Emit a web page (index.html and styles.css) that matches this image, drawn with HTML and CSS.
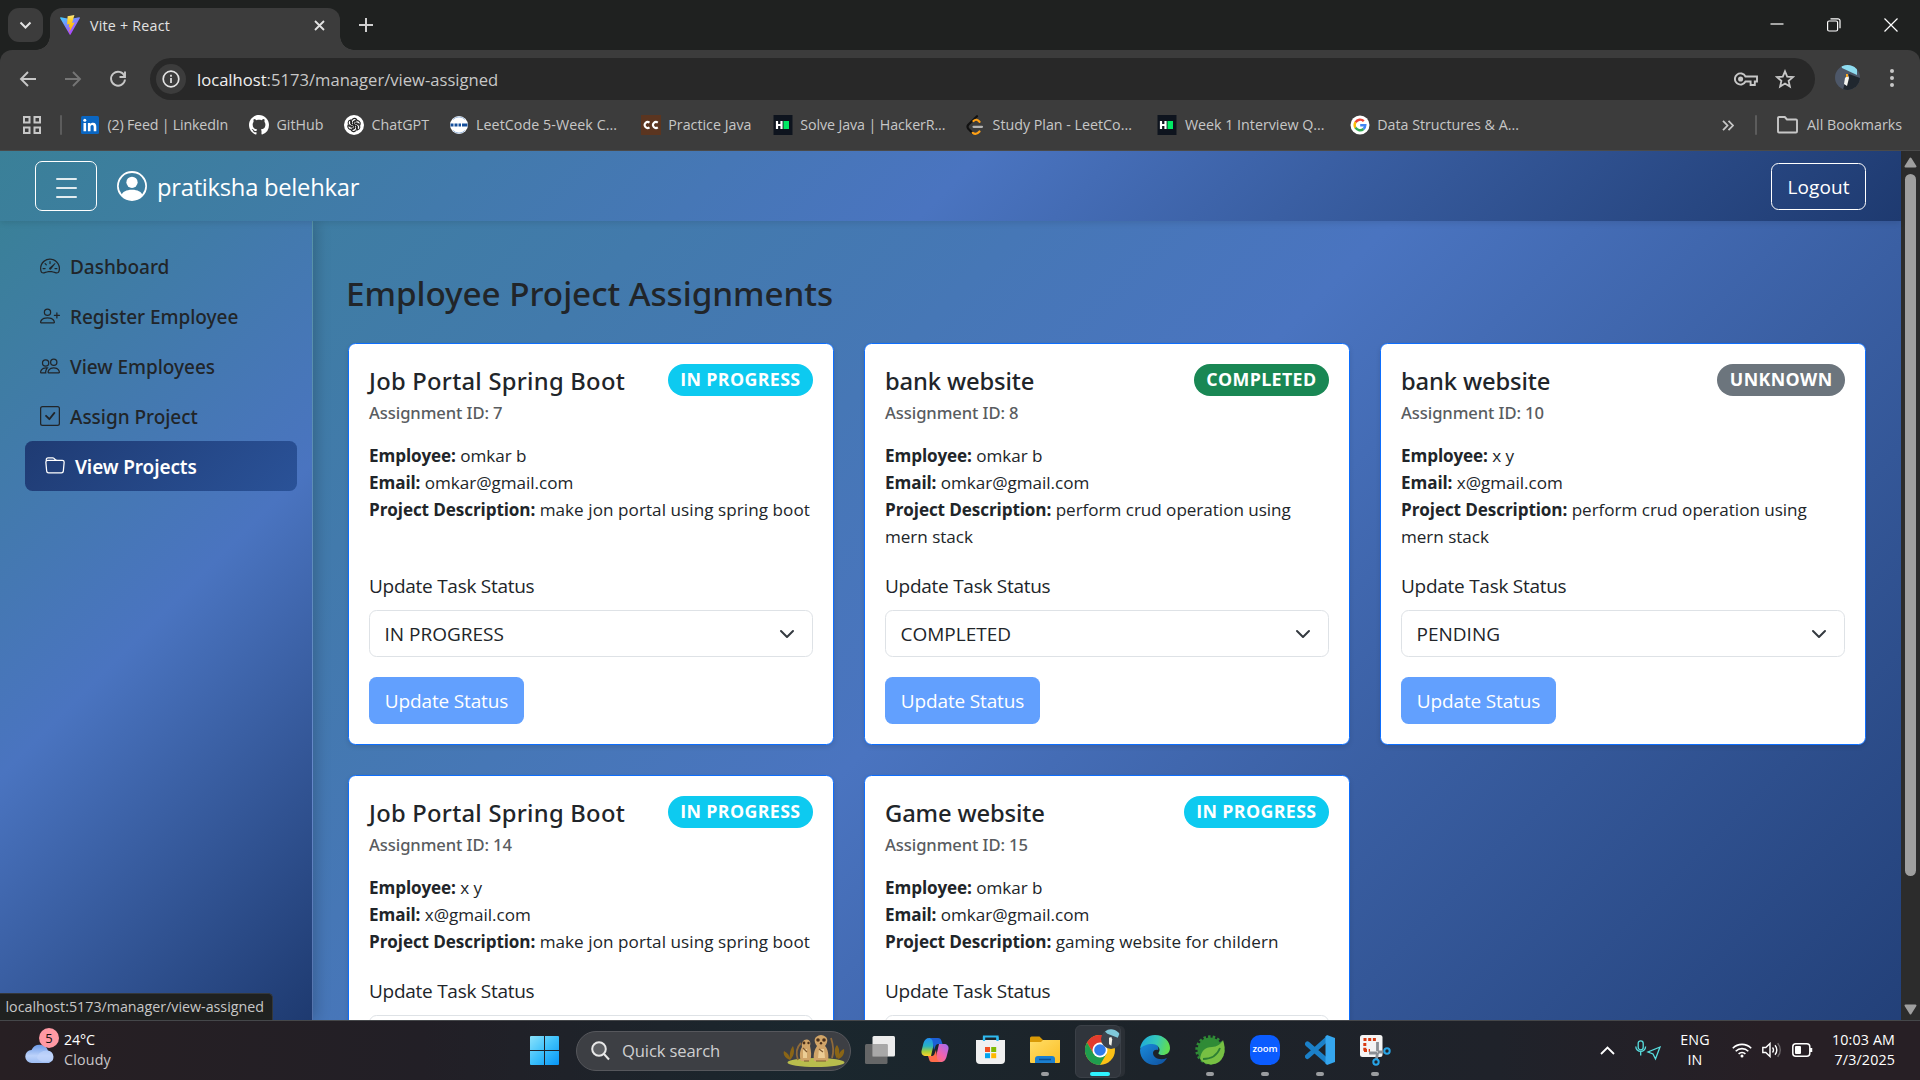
FILE: index.html
```html
<!DOCTYPE html>
<html lang="en">
<head>
<meta charset="utf-8">
<title>Vite + React</title>
<link rel="stylesheet" href="styles.css">
</head>
<body>
<div class="screen">

<header class="titlebar">
  <div class="tab-search"><svg width="13" height="9" viewBox="0 0 13 9" fill="none" stroke="#e3e3e3" stroke-width="2"><path d="M1.5 1.5l5 5 5-5"/></svg></div>
  <div class="tab">
    <svg class="vite" width="20" height="20" viewBox="0 0 20 20">
      <defs>
        <linearGradient id="va" x1="0" y1="0" x2=".7" y2="1"><stop offset="0" stop-color="#41d1ff"/><stop offset="1" stop-color="#bd34fe"/></linearGradient>
        <linearGradient id="vb" x1="0" y1="0" x2="0" y2="1"><stop offset="0" stop-color="#ffea83"/><stop offset=".3" stop-color="#ffcf25"/><stop offset="1" stop-color="#ffa800"/></linearGradient>
      </defs>
      <path fill="url(#va)" d="M19.8 3.2L10.6 19.6a.6.6 0 0 1-1 0L.2 3.2a.6.6 0 0 1 .6-.9l9.3 1.7 9.1-1.7a.6.6 0 0 1 .6.9z"/>
      <path fill="url(#vb)" d="M14.4 0L7.6 1.3l-.5 8.2 2.300-.5-.7 3.500 1.500-.4-1.100 5.500 5.600-10-2.600.5z"/>
    </svg>
    <span class="tab-title">Vite + React</span>
    <svg width="11" height="11" viewBox="0 0 11 11" stroke="#e3e3e3" stroke-width="1.8"><path d="M1 1l9 9M10 1l-9 9"/></svg>
  </div>
  <svg class="new-tab" width="14" height="14" viewBox="0 0 14 14" stroke="#d0d0d0" stroke-width="2"><path d="M7 0v14M0 7h14"/></svg>
  <div class="window-controls">
    <svg width="14" height="14" viewBox="0 0 14 14" stroke="#fff" stroke-width="1.2"><path d="M.5 6h13"/></svg>
    <svg width="14" height="14" viewBox="0 0 14 14" fill="none" stroke="#fff" stroke-width="1.2"><rect x=".6" y="3" width="10" height="10" rx="1.5"/><path d="M3.500.8h7.500a2 2 0 0 1 2 2v7.500"/></svg>
    <svg width="14" height="14" viewBox="0 0 14 14" stroke="#fff" stroke-width="1.2"><path d="M.5.5l13 13M13.500.5l-13 13"/></svg>
  </div>
</header>

<div class="toolbar">
  <svg class="nav-ico" width="18" height="18" viewBox="0 0 18 18" fill="none" stroke="#c7c7c7" stroke-width="1.9"><path d="M17 9H2.500M9 2L2 9l7 7"/></svg>
  <svg class="nav-ico" width="18" height="18" viewBox="0 0 18 18" fill="none" stroke="#757575" stroke-width="1.9"><path d="M1 9h14.500M9 2l7 7-7 7"/></svg>
  <svg class="nav-ico" width="18" height="18" viewBox="0 0 18 18" fill="none" stroke="#c7c7c7" stroke-width="1.900"><path d="M15.500 6A7 7 0 1 0 16 9.500"/><path d="M16 1.500v5.500h-5.500"/></svg>
  <div class="omnibox">
    <span class="site-info"><svg width="18" height="18" viewBox="0 0 18 18" fill="none" stroke="#e3e3e3" stroke-width="1.7"><circle cx="9" cy="9" r="7.800"/><path d="M9 8v5M9 4.800v1.900"/></svg></span>
    <span class="url"><b>localhost</b>:5173/manager/view-assigned</span>
    <svg class="key" width="24" height="16" viewBox="0 0 24 16" fill="none" stroke="#c7c7c7" stroke-width="1.900"><path d="M11.500 5.500H23v5h-2.200v3.500h-4.200v-3.500h-5.100A5.600 5.600 0 1 1 11.500 5.500z"/><circle cx="6.600" cy="8" r="1.600" fill="#c7c7c7"/></svg>
    <svg width="20" height="20" viewBox="0 0 20 20" fill="none" stroke="#c7c7c7" stroke-width="1.800" stroke-linejoin="miter"><path d="M10 2.300l2.200 5.300 5.800.5-4.400 3.800 1.300 5.600L10 14.500l-4.900 3 1.300-5.600L2 8.100l5.800-.5z"/></svg>
  </div>
  <svg class="profile" width="25" height="25" viewBox="0 0 25 25"><defs><clipPath id="pc"><circle cx="12.500" cy="12.500" r="12.500"/></clipPath></defs><g clip-path="url(#pc)"><path fill="#4d5768" d="M0 0h25v25H0z"/><path fill="#8edcf0" d="M6 0h16v10L7 3z"/><path fill="#20272f" d="M14 9l11 4v12H8l2-8z"/><path fill="#f4f4f0" d="M10 13l3-3 1 3-2 8-3-2z"/><path fill="#f5a623" d="M11 9h2v3h-2z"/></g></svg>
  <svg class="dots" width="4" height="18" viewBox="0 0 4 18" fill="#c7c7c7"><circle cx="2" cy="2" r="2"/><circle cx="2" cy="9" r="2"/><circle cx="2" cy="16" r="2"/></svg>
</div>

<div class="bookmarks">
  <svg width="18" height="18" viewBox="0 0 18 18" fill="none" stroke="#c7c7c7" stroke-width="2"><path d="M1 1h5.500v5.500H1zM11.500 1H17v5.500h-5.500zM1 11.500h5.500V17H1zM11.500 11.500H17V17h-5.500z"/></svg>
  <i class="sep"></i>
  <div class="bm-list">
    <span class="bm bm-169"><svg width="20" height="20" viewBox="0 0 20 20"><rect x="1" y="1" width="18" height="18" rx="1.500" fill="#0a66c2"/><path fill="#fff" d="M3.500 8h2.600v8.300H3.500zM7.900 8h2.500v1.200c.5-.9 1.400-1.400 2.600-1.400 2.700 0 3.300 1.700 3.300 4v4.500h-2.600v-4c0-1.200-.1-2.300-1.500-2.300s-1.700 1-1.700 2.200v4.100H7.900z"/><circle cx="4.800" cy="5.200" r="1.500" fill="#fff"/></svg><span class="tight">(2) Feed | LinkedIn</span></span>
    <span class="bm bm-95"><svg width="20" height="20" viewBox="0 0 16 16" fill="#fff"><path d="M8 0C3.580 0 0 3.580 0 8c0 3.540 2.290 6.530 5.470 7.590.4.070.55-.17.55-.38 0-.19-.01-.82-.01-1.490-2.010.37-2.530-.49-2.690-.94-.09-.23-.48-.94-.82-1.130-.28-.15-.68-.52-.01-.53.63-.01 1.080.58 1.230.82.72 1.210 1.870.87 2.330.66.07-.52.28-.87.51-1.070-1.780-.2-3.640-.89-3.640-3.950 0-.87.31-1.590.82-2.150-.08-.2-.36-1.020.08-2.120 0 0 .67-.21 2.200.82.64-.18 1.320-.27 2-.27s1.360.09 2 .27c1.530-1.040 2.200-.82 2.200-.82.44 1.100.16 1.920.08 2.120.51.56.82 1.270.82 2.150 0 3.070-1.870 3.750-3.650 3.950.29.25.54.73.54 1.480 0 1.070-.01 1.930-.01 2.200 0 .21.15.46.55.38A8.010 8.010 0 0 0 16 8c0-4.420-3.580-8-8-8"/></svg><span>GitHub</span></span>
    <span class="bm bm-105"><svg width="20" height="20" viewBox="0 0 20 20" fill="none"><circle cx="10" cy="10" r="10" fill="#fff"/><g stroke="#222" stroke-width="1.100"><path id="pet" d="M7.500 10.200V6.300a2.900 2.900 0 0 1 5.200-1.700l-3.200 1.900v3.600"/><use href="#pet" transform="rotate(60 10 10)"/><use href="#pet" transform="rotate(120 10 10)"/><use href="#pet" transform="rotate(180 10 10)"/><use href="#pet" transform="rotate(240 10 10)"/><use href="#pet" transform="rotate(300 10 10)"/></g></svg><span>ChatGPT</span></span>
    <span class="bm bm-192"><svg width="20" height="20" viewBox="0 0 20 20"><circle cx="10" cy="10" r="9" fill="#fff"/><path d="M4 4.500a8.300 8.300 0 0 1 12 0M4 15.500a8.300 8.300 0 0 0 12 0" stroke="#9db9dd" fill="none"/><path d="M1.500 10h3M5.500 10h3M9.500 10h2.500M13 10h5.500" stroke="#17509b" stroke-width="3"/></svg><span class="loose">LeetCode 5-Week C...</span></span>
    <span class="bm bm-132"><svg width="20" height="20" viewBox="0 0 20 20"><path fill="#5b3520" d="M0 0h20v20H0z"/><path d="M8.500 7.600a3 3 0 1 0 0 4.800M16.800 7.600a3 3 0 1 0 0 4.800" fill="none" stroke="#fff" stroke-width="2"/></svg><span>Practice Java</span></span>
    <span class="bm bm-192"><svg width="20" height="20" viewBox="0 0 20 20"><path fill="#0e141e" d="M.5 0h19v20H.5z"/><path d="M4 6v8M8.500 6v8M4 10h4.500" stroke="#fff" stroke-width="2.200"/><path fill="#00ea64" d="M10.500 6H16v8h-5.500z"/></svg><span class="tight2">Solve Java | HackerR...</span></span>
    <span class="bm bm-192"><svg width="20" height="20" viewBox="0 0 20 20" fill="none" stroke-width="2.200" stroke-linecap="round"><path stroke="#111" d="M12 1.200L3.300 9.800a3.200 3.200 0 0 0 0 4l4.200 4.200"/><path stroke="#ffa116" d="M8.500 6c2-2 4-1.500 6 .8M7.800 17.800c2.500 2 4.500 1.200 6.700-1.300"/><path stroke="#b3b3b3" d="M8.500 11.800H17"/></svg><span>Study Plan - LeetCo...</span></span>
    <span class="bm bm-192"><svg width="20" height="20" viewBox="0 0 20 20"><path fill="#0e141e" d="M.5 0h19v20H.5z"/><path d="M4 6v8M8.500 6v8M4 10h4.500" stroke="#fff" stroke-width="2.200"/><path fill="#00ea64" d="M10.500 6H16v8h-5.500z"/></svg><span>Week 1 Interview Q...</span></span>
    <span class="bm bm-192"><svg width="20" height="20" viewBox="0 0 20 20" fill="none" stroke-width="2.400"><circle cx="10" cy="10" r="9.500" fill="#fff"/><path stroke="#ea4335" d="M13.800 6.200A5.300 5.300 0 0 0 5.500 7.300"/><path stroke="#fbbc05" d="M5.500 7.200a5.300 5.300 0 0 0 0 5.600"/><path stroke="#34a853" d="M5.500 12.700a5.300 5.300 0 0 0 8 1.300"/><path stroke="#4285f4" d="M13.500 14a5.300 5.300 0 0 0 1.800-3.800H10.200"/></svg><span>Data Structures &amp; A...</span></span>
  </div>
  <svg class="more" width="12" height="11" viewBox="0 0 12 11" fill="none" stroke="#c7c7c7" stroke-width="1.800"><path d="M1 .8l4.500 4.700L1 10.200M6.500.8L11 5.500l-4.500 4.700"/></svg>
  <i class="sep"></i>
  <svg class="folder" width="21" height="18" viewBox="0 0 21 18" fill="none" stroke="#c7c7c7" stroke-width="1.900" stroke-linejoin="round"><path d="M2 1h5.800l2.200 2.500h9a1 1 0 0 1 1 1V15.500a1 1 0 0 1-1 1H2a1 1 0 0 1-1-1V2a1 1 0 0 1 1-1z"/></svg>
  <span class="all-bm">All Bookmarks</span>
</div>

<div class="viewport">
  <div class="page">
    <nav class="navbar">
      <div class="burger"><i></i><i></i><i></i></div>
      <svg class="user" width="30" height="30" viewBox="0 0 16 16" fill="#fff"><path d="M11 6a3 3 0 1 1-6 0 3 3 0 0 1 6 0"/><path fill-rule="evenodd" d="M0 8a8 8 0 1 1 16 0A8 8 0 0 1 0 8m8-7a7 7 0 0 0-5.468 11.370C3.242 11.226 4.805 10 8 10s4.757 1.225 5.468 2.370A7 7 0 0 0 8 1"/></svg>
      <span class="username">pratiksha belehkar</span>
      <button class="logout">Logout</button>
    </nav>
    <div class="body">
      <aside class="sidebar">
        <a class="item"><svg width="20" height="20" viewBox="0 0 16 16"><path d="M8 4a.5.5 0 0 1 .5.5V6a.5.5 0 0 1-1 0V4.500A.5.5 0 0 1 8 4M3.732 5.732a.5.5 0 0 1 .707 0l.915.914a.5.5 0 1 1-.708.708l-.914-.915a.5.5 0 0 1 0-.707M2 10a.5.5 0 0 1 .5-.5h1.586a.5.5 0 0 1 0 1H2.500A.5.5 0 0 1 2 10m9.500 0a.5.5 0 0 1 .5-.5h1.500a.5.5 0 0 1 0 1H12a.5.5 0 0 1-.5-.5m.754-4.246a.39.39 0 0 0-.527-.02L7.547 9.310a.91.91 0 1 0 1.302 1.258l3.434-4.297a.39.39 0 0 0-.029-.518z"/><path fill-rule="evenodd" d="M0 10a8 8 0 1 1 15.547 2.661c-.442 1.253-1.845 1.602-2.932 1.250C11.309 13.488 9.475 13 8 13c-1.474 0-3.310.488-4.615.911-1.087.352-2.490.003-2.932-1.250A8 8 0 0 1 0 10m8-7a7 7 0 0 0-6.603 9.329c.203.575.923.876 1.680.63C4.397 12.533 6.358 12 8 12s3.604.532 4.923.96c.757.245 1.477-.056 1.680-.631A7 7 0 0 0 8 3"/></svg><span>Dashboard</span></a>
        <a class="item"><svg width="20" height="20" viewBox="0 0 16 16"><path d="M6 8a3 3 0 1 0 0-6 3 3 0 0 0 0 6m2-3a2 2 0 1 1-4 0 2 2 0 0 1 4 0m4 8c0 1-1 1-1 1H1s-1 0-1-1 1-4 6-4 6 3 6 4m-1-.004c-.001-.246-.154-.986-.832-1.664C9.516 10.680 8.289 10 6 10s-3.516.68-4.168 1.332c-.678.678-.83 1.418-.832 1.664z"/><path fill-rule="evenodd" d="M13.500 5a.5.5 0 0 1 .5.5V7h1.500a.5.5 0 0 1 0 1H14v1.500a.5.5 0 0 1-1 0V8h-1.500a.5.5 0 0 1 0-1H13V5.500a.5.5 0 0 1 .5-.5"/></svg><span>Register Employee</span></a>
        <a class="item"><svg width="20" height="20" viewBox="0 0 16 16"><path d="M15 14s1 0 1-1-1-4-5-4-5 3-5 4 1 1 1 1zm-7.978-1L7 12.996c.001-.264.167-1.030.76-1.720C8.312 10.629 9.282 10 11 10c1.717 0 2.687.63 3.240 1.276.593.69.758 1.457.76 1.720l-.008.002-.014.002zM11 7a2 2 0 1 0 0-4 2 2 0 0 0 0 4m3-2a3 3 0 1 1-6 0 3 3 0 0 1 6 0M6.936 9.280a6 6 0 0 0-1.230-.247A7 7 0 0 0 5 9c-4 0-5 3-5 4q0 1 1 1h4.216A2.240 2.240 0 0 1 5 13c0-1.010.377-2.042 1.090-2.904.243-.294.526-.569.846-.816M4.920 10A5.500 5.500 0 0 0 4 13H1c0-.26.164-1.030.76-1.724.545-.636 1.492-1.256 3.160-1.275zM1.500 5.500a3 3 0 1 1 6 0 3 3 0 0 1-6 0m3-2a2 2 0 1 0 0 4 2 2 0 0 0 0-4"/></svg><span>View Employees</span></a>
        <a class="item"><svg width="20" height="20" viewBox="0 0 16 16"><path d="M14 1a1 1 0 0 1 1 1v12a1 1 0 0 1-1 1H2a1 1 0 0 1-1-1V2a1 1 0 0 1 1-1zM2 0a2 2 0 0 0-2 2v12a2 2 0 0 0 2 2h12a2 2 0 0 0 2-2V2a2 2 0 0 0-2-2z"/><path d="M10.970 4.970a.75.75 0 0 1 1.071 1.050l-3.992 4.990a.75.75 0 0 1-1.080.02L4.324 8.384a.75.75 0 1 1 1.060-1.060l2.094 2.093 3.473-4.425z"/></svg><span>Assign Project</span></a>
        <a class="item active"><svg width="20" height="20" viewBox="0 0 16 16"><path d="M.54 3.870.5 3a2 2 0 0 1 2-2h3.672a2 2 0 0 1 1.414.586l.828.828A2 2 0 0 0 9.828 3h3.982a2 2 0 0 1 1.992 2.181l-.637 7A2 2 0 0 1 13.174 14H2.826a2 2 0 0 1-1.991-1.819l-.637-7a2 2 0 0 1 .342-1.310zM2.190 4a1 1 0 0 0-.996 1.090l.637 7a1 1 0 0 0 .995.91h10.348a1 1 0 0 0 .995-.91l.637-7A1 1 0 0 0 13.810 4zm4.690-1.707A1 1 0 0 0 6.172 2H2.500a1 1 0 0 0-1 .981l.006.139q.323-.119.684-.12h5.396z"/></svg><span>View Projects</span></a>
      </aside>
      <main class="main">
        <h2 class="heading">Employee Project Assignments</h2>
        <div class="grid">
          <section class="card">
            <div class="card-head"><h5 class="title wide">Job Portal Spring Boot</h5><span class="badge info">IN PROGRESS</span></div>
            <h6 class="sub">Assignment ID: 7</h6>
            <p class="desc"><strong>Employee:</strong> omkar b<br><strong>Email:</strong> omkar@gmail.com<br><strong>Project Description:</strong> <span class="loose">make jon portal using spring boot</span></p>
            <div class="form"><label class="label">Update Task Status</label><div class="select">IN PROGRESS<svg width="20" height="20" viewBox="0 0 16 16"><path fill="none" stroke="#343a40" stroke-linecap="round" stroke-linejoin="round" stroke-width="2" d="m2 5 6 6 6-6"/></svg></div><button class="update">Update Status</button></div>
          </section>
          <section class="card">
            <div class="card-head"><h5 class="title">bank website</h5><span class="badge success">COMPLETED</span></div>
            <h6 class="sub">Assignment ID: 8</h6>
            <p class="desc"><strong>Employee:</strong> omkar b<br><strong>Email:</strong> omkar@gmail.com<br><strong>Project Description:</strong> perform crud operation using<br>mern stack</p>
            <div class="form"><label class="label">Update Task Status</label><div class="select">COMPLETED<svg width="20" height="20" viewBox="0 0 16 16"><path fill="none" stroke="#343a40" stroke-linecap="round" stroke-linejoin="round" stroke-width="2" d="m2 5 6 6 6-6"/></svg></div><button class="update">Update Status</button></div>
          </section>
          <section class="card">
            <div class="card-head"><h5 class="title">bank website</h5><span class="badge secondary">UNKNOWN</span></div>
            <h6 class="sub">Assignment ID: 10</h6>
            <p class="desc"><strong>Employee:</strong> x y<br><strong>Email:</strong> x@gmail.com<br><strong>Project Description:</strong> perform crud operation using<br>mern stack</p>
            <div class="form"><label class="label">Update Task Status</label><div class="select">PENDING<svg width="20" height="20" viewBox="0 0 16 16"><path fill="none" stroke="#343a40" stroke-linecap="round" stroke-linejoin="round" stroke-width="2" d="m2 5 6 6 6-6"/></svg></div><button class="update">Update Status</button></div>
          </section>
          <section class="card">
            <div class="card-head"><h5 class="title wide">Job Portal Spring Boot</h5><span class="badge info">IN PROGRESS</span></div>
            <h6 class="sub">Assignment ID: 14</h6>
            <p class="desc"><strong>Employee:</strong> x y<br><strong>Email:</strong> x@gmail.com<br><strong>Project Description:</strong> <span class="loose">make jon portal using spring boot</span></p>
            <div class="form"><label class="label">Update Task Status</label><div class="select"></div></div>
          </section>
          <section class="card">
            <div class="card-head"><h5 class="title">Game website</h5><span class="badge info">IN PROGRESS</span></div>
            <h6 class="sub">Assignment ID: 15</h6>
            <p class="desc"><strong>Employee:</strong> omkar b<br><strong>Email:</strong> omkar@gmail.com<br><strong>Project Description:</strong> <span class="loose">gaming website for childern</span></p>
            <div class="form"><label class="label">Update Task Status</label><div class="select"></div></div>
          </section>
        </div>
      </main>
    </div>
  </div>
  <div class="scrollbar">
    <svg width="13" height="11" viewBox="0 0 13 11"><path fill="#9f9f9f" stroke="#9f9f9f" stroke-width="2" stroke-linejoin="round" d="M6.500 1.500L11.500 9.500H1.500z"/></svg>
    <i class="thumb"></i>
    <svg width="13" height="11" viewBox="0 0 13 11"><path fill="#9f9f9f" stroke="#9f9f9f" stroke-width="2" stroke-linejoin="round" d="M6.500 9.500L11.500 1.500H1.500z"/></svg>
  </div>
  <div class="status-bubble">localhost:5173/manager/view-assigned</div>
</div>

<footer class="taskbar">
  <div class="weather">
    <div class="cloud">
      <svg width="32" height="24" viewBox="0 0 32 24"><defs><linearGradient id="cl" x1="0" y1="0" x2="0" y2="1"><stop offset="0" stop-color="#6d9be8"/><stop offset=".6" stop-color="#bcd2fa"/><stop offset="1" stop-color="#9dbdf3"/></linearGradient></defs><path fill="url(#cl)" d="M7 22a6.500 6.500 0 0 1-.5-13A9 9 0 0 1 23 9.500a6.500 6.500 0 0 1 1 12.500z"/><path fill="#c3d6fb" d="M12 17c1-6 8-9 12-7a6.300 6.300 0 0 1 3 10c-6 1-12 2-15-3z" opacity=".6"/></svg>
      <span class="count">5</span>
    </div>
    <div class="lines"><span class="temp">24°C</span><span>Cloudy</span></div>
  </div>

  <div class="dock">
    <svg width="29" height="29" viewBox="0 0 29 29"><defs><linearGradient id="wn" x1="0" y1="0" x2="1" y2="1"><stop offset="0" stop-color="#8be2fb"/><stop offset=".5" stop-color="#3cc0fb"/><stop offset="1" stop-color="#0795f5"/></linearGradient></defs><path fill="url(#wn)" d="M1 0h13v14H0V1a1 1 0 0 1 1-1zM15 0h13a1 1 0 0 1 1 1v13H15zM0 15h14v14H1a1 1 0 0 1-1-1zM15 15h14v13a1 1 0 0 1-1 1H15z"/></svg>
    <div class="search">
      <svg width="19" height="20" viewBox="0 0 19 20" fill="none" stroke="#e8e8e8" stroke-width="2"><circle cx="8" cy="8" r="6.800" fill="#5d5f63"/><path d="M13 13l5 5.500"/></svg>
      <span>Quick search</span>
      <svg class="meerkats" width="62" height="34" viewBox="0 0 62 34"><ellipse cx="33" cy="28.500" rx="28.500" ry="4.500" fill="#b9bd4d"/><g fill="#8a6516"><path d="M7 26C1 24 0 19 1 17c4 2 6 5 6 9zM7 26c-1-6 1-12 3-14 2 5 1 10-3 14zM54 25c-3-5-3-11 0-14 3 4 3 9 0 14zM55 25c0-5 3-9 6-10 1 5-2 9-6 10z"/></g><path d="M15 26c-3-8 0-14 3-17M49 24c2-6 1-14-1-20" stroke="#8f6a3b" stroke-width="1.800" fill="none"/><g fill="#d0a468"><path d="M18 27c-2-5-1-11 1-14-1-5 2-8 5-7.500 3 .3 4 3.500 3 6.500 1 5 2 10 0 15z"/><path d="M31 27c-1-8 1-12 3-15-4-5-3-10 4-11 7 1 8 6 4 11 3 3 4 9 3 15z"/></g><g fill="#4a2f1a"><circle cx="21" cy="9" r="1.400"/><circle cx="25.500" cy="9" r="1.200"/><circle cx="35" cy="6" r="1.800"/><circle cx="41" cy="6" r="1.800"/><circle cx="38" cy="9.300" r="1.200"/></g><path d="M36 15h5l1 9h-7zM20 15h4v9h-4z" fill="#eccd95"/><path d="M20 14l4 4M36 15l4 3M21 27h5M33 27h10" stroke="#7d5730" stroke-width="1.200" fill="none"/></svg>
    </div>
    <span class="app"><svg width="30" height="29" viewBox="0 0 30 29"><rect x="7.500" y="0" width="22.500" height="20.500" rx="1.500" fill="#ececec"/><rect x="0" y="8" width="22.500" height="20" rx="1.500" fill="#707070" fill-opacity=".88"/><path d="M7.500 8h15v12.500h-15z" fill="#a8a8a8"/></svg></span>
    <span class="app"><svg width="30" height="28" viewBox="0 0 30 28"><defs><linearGradient id="c1" x1="0" y1="0" x2="0" y2="1"><stop offset="0" stop-color="#2390f5"/><stop offset=".45" stop-color="#28b3c0"/><stop offset=".75" stop-color="#a6cf3a"/><stop offset="1" stop-color="#ffd02c"/></linearGradient><linearGradient id="c2" x1="1" y1="0" x2="0" y2="1"><stop offset="0" stop-color="#9c6cf5"/><stop offset=".5" stop-color="#f262ae"/><stop offset="1" stop-color="#ff7a43"/></linearGradient></defs><path fill="url(#c2)" d="M19 8h5c3 0 5 2 4.500 5l-2 8c-1 3-2.500 5-6 5H11c3 0 4-2 5-5z"/><path fill="url(#c1)" d="M11 20H6c-3 0-5-2-4.500-5l2-8C4.500 4 6 2 9.500 2H19c-3 0-4 2-5 5z"/><path fill="#1d5fd6" d="M9.500 2h8.500c2 0 3 1 3.500 3l1 3H19c-2 0-3 .5-3.500 2l-1.500 4-1.500-9c0-1-1-2-3-3z"/><path fill="#ff6c4a" d="M20.500 26H12c-2 0-2.500-1-3-3l-1-3h3c2 0 3-.5 3.500-2l1.500-4 1 8c0 2 1 3 3.500 4z"/></svg></span>
    <span class="app"><svg width="29" height="30" viewBox="0 0 29 30"><path d="M8 7V1.500h13.500V7" fill="none" stroke="#2fb9ef" stroke-width="2.200"/><path fill="#f0f0f0" d="M0 5h29v20a4 4 0 0 1-4 4H4a4 4 0 0 1-4-4z"/><path d="M8 6V2M21.500 6V2" stroke="#2fb9ef" stroke-width="2.200"/><path fill="#f25022" d="M9 12h5v5H9z"/><path fill="#7fba00" d="M15.200 12h5v5h-5z"/><path fill="#00a4ef" d="M9 18.200h5v5H9z"/><path fill="#ffb900" d="M15.200 18.200h5v5h-5z"/></svg></span>
    <span class="app run"><svg width="30" height="28" viewBox="0 0 30 28"><path fill="#d99a06" d="M0 2a1.500 1.500 0 0 1 1.500-1.500h8L13 4h5v4H0z"/><defs><linearGradient id="fx" x1="0" y1="0" x2="1" y2="1"><stop offset="0" stop-color="#ffdd67"/><stop offset="1" stop-color="#fcbf25"/></linearGradient></defs><path fill="url(#fx)" d="M0 6h11l2-2h17v22a1 1 0 0 1-1 1H1a1 1 0 0 1-1-1z"/><path fill="#1b7fd0" d="M5 27v-4a3 3 0 0 1 3-3h14a3 3 0 0 1 3 3v4z"/><path d="M9 23.500h12" stroke="#0b4f92" stroke-width="1.500"/></svg></span>
    <span class="app current"><svg width="30" height="30" viewBox="0 0 30 30"><circle cx="15" cy="15" r="15" fill="#fbc116"/><path fill="#e33b2e" d="M15 15V7.500h13A15 15 0 0 0 2 7.500L8.500 18.800z"/><path fill="#1f9d4e" d="M15 15L8.500 18.800 2 7.500A15 15 0 0 0 15 30l6.500-11.300z"/><circle cx="15" cy="15" r="7.500" fill="#fff"/><circle cx="15" cy="15" r="5.800" fill="#2f7bea"/></svg><svg class="mini" width="20" height="20" viewBox="0 0 25 25"><circle cx="12.500" cy="12.500" r="12.500" fill="#3d444e"/><path fill="#7fc8da" d="M5 3a12.500 12.500 0 0 1 18 3l-2 5L8 6z"/><path fill="#f0eee6" d="M10 11l3-1 1 3-1 8-3-2z"/></svg></span>
    <span class="app"><svg width="30" height="30" viewBox="0 0 30 30"><defs><linearGradient id="e1" x1="0" y1="0" x2="1" y2=".2"><stop offset="0" stop-color="#1ba6e0"/><stop offset=".6" stop-color="#36c9b8"/><stop offset="1" stop-color="#5fdc55"/></linearGradient><linearGradient id="e2" x1="0" y1="0" x2="1" y2="1"><stop offset="0" stop-color="#1a8ede"/><stop offset="1" stop-color="#0f4f9d"/></linearGradient></defs><path fill="url(#e2)" d="M0 15C2 8 9 6 14 8c4 2 5 5 4 7-2-1-5 0-5 3 0 5 7 8 14 5C24 28 20 30 15 30 7 30 0 24 0 15z"/><path fill="url(#e1)" d="M0 14C1 6 7 0 15 0c9 0 15 6.500 15 13 0 5-4 7-7 7-5 0-5-2-4-3 2-3-1-8-7-8C7 9 2 11 0 14z"/></svg></span>
    <span class="app run"><svg width="30" height="30" viewBox="0 0 30 30"><circle cx="15" cy="15" r="12.500" fill="#2f8b36"/><circle cx="15" cy="15" r="13.300" fill="none" stroke="#2f8b36" stroke-width="2.800" stroke-dasharray="2.500 2.140"/><path fill="#77c043" d="M5 24c1-8 5-12 12-12 5 0 9-3 11-7 3 9 2 17-4 22-6 4-15 3-19-3z"/><path d="M8 24c8 0 14-3 17-11" fill="none" stroke="#2c7f33" stroke-width="1.800"/></svg></span>
    <span class="app run"><span class="zoom">zoom</span></span>
    <span class="app run"><svg width="30" height="30" viewBox="0 0 30 30"><path d="M22 4L2.500 21.500M2.500 9L22 26" stroke="#1b80c8" stroke-width="5" stroke-linecap="round"/><path fill="#35a6ee" d="M22 0l8 3v24l-8 3-1.500-1.500v-27z"/></svg></span>
    <span class="app run"><svg width="31" height="31" viewBox="0 0 31 31" fill="none"><rect width="22.500" height="22" rx="2.500" fill="#f4f4f4"/><path d="M3.500 4.500h12.500M4.800 8v8M4 15.500h6" stroke="#d8390f" stroke-width="3" stroke-dasharray="3 1.700"/><path d="M17.500 7v9M17.500 17h6M17.500 18l-1 6M9 18h8" stroke="#8b8f94" stroke-width="2.800"/><circle cx="16" cy="27" r="2.700" stroke="#27a5e8" stroke-width="2"/><circle cx="27" cy="16" r="2.700" stroke="#27a5e8" stroke-width="2"/></svg></span>
  </div>

  <div class="tray">
    <svg class="t-up" width="15" height="9" viewBox="0 0 15 9" fill="none" stroke="#fff" stroke-width="1.800"><path d="M1 8l6.500-6.500L14 8"/></svg>
    <svg class="t-mic" width="26" height="21" viewBox="0 0 26 21" fill="none" stroke="#58dfe0" stroke-width="1.300"><rect x="3.200" y=".8" width="5" height="9" rx="2.500"/><path d="M.8 6.500a4.900 4.900 0 0 0 9.800 0M5.700 11.500v4M25 7L20.500 19l-2.500-5-5-2z"/></svg>
    <span class="lang"><span>ENG</span><span>IN</span></span>
    <svg class="t-wifi" width="20" height="16" viewBox="0 0 20 16" fill="none" stroke="#fff" stroke-width="1.600"><path d="M.8 6.200a13 13 0 0 1 18.400 0M3.700 9.200a9 9 0 0 1 12.600 0M6.600 11.900a5 5 0 0 1 6.800 0"/><circle cx="10" cy="14" r="1.500" fill="#fff" stroke="none"/></svg>
    <svg class="t-vol" width="20" height="16" viewBox="0 0 20 16" fill="none" stroke="#fff" stroke-width="1.400"><path d="M.8 5.500h3L8 1.500v13l-4.200-4h-3zM10.500 5.500a4 4 0 0 1 0 5M13 3.300a7 7 0 0 1 0 9.400"/><path stroke="#6b6669" d="M15.600 1.200a10 10 0 0 1 0 13.600"/></svg>
    <svg class="t-bat" width="21" height="14" viewBox="0 0 21 14" fill="none" stroke="#fff" stroke-width="1.500"><rect x=".8" y=".8" width="17" height="12.400" rx="3"/><path stroke-width="2.500" d="M19 5v4"/><rect x="3" y="3" width="6" height="8" rx="1" fill="#fff" stroke="none"/></svg>
    <span class="clock"><span>10:03 AM</span><span>7/3/2025</span></span>
  </div>
</footer>
</div>
</body>
</html>
```
FILE: styles.css
```css
* { box-sizing: border-box; }
body { margin: 0; font-family: "Open Sans", "Noto Sans", sans-serif; color: #212529; }
h2, h5, h6, p { margin: 0; }
svg { display: block; flex: none; }
button { font-family: inherit; }

.screen { width: 1920px; height: 1080px; overflow: hidden; display: flex; flex-direction: column; background: #1f2120; }

/* Browser chrome */
.titlebar { height: 50px; flex: none; display: flex; padding: 8px 22px 0 8px; }
.tab-search { width: 35px; height: 34px; border-radius: 11px; background: #3c3c3c; display: flex; align-items: center; justify-content: center; }
.tab { position: relative; width: 290px; margin-left: 7px; height: 42px; background: #3c3c3c; border-radius: 12px 12px 0 0; display: flex; align-items: center; padding: 0 15px 8px 10px; }
.tab::before, .tab::after { content: ""; position: absolute; bottom: 0; width: 14px; height: 14px; }
.tab::before { left: -14px; background: radial-gradient(circle at 0 0, transparent 13.5px, #3c3c3c 14px); }
.tab::after { right: -14px; background: radial-gradient(circle at 100% 0, transparent 13.5px, #3c3c3c 14px); }
.tab-title { flex: 1; margin-left: 10px; font-size: 14.25px; letter-spacing: .22px; color: #e3e3e3; }
.new-tab { margin: 10px 0 0 19px; }
.window-controls { margin: 10px 0 0 auto; display: flex; gap: 43px; }

.toolbar { height: 54px; flex: none; background: #3c3c3c; border-radius: 12px 12px 0 0; display: flex; align-items: center; padding: 4px 26px 0 19px; }
.nav-ico { margin-right: 27px; }
.omnibox { width: 1665px; height: 42px; margin-left: -4px; border-radius: 21px; background: #282828; display: flex; align-items: center; padding: 0 20px 0 6px; flex: none; }
.site-info { width: 30px; height: 30px; border-radius: 50%; background: #3c3c3c; display: flex; align-items: center; justify-content: center; }
.url { flex: 1; margin-left: 11px; font-size: 16.63px; color: #c7c7c7; }
.url b { font-weight: 400; color: #f0f0f0; }
.key { margin-right: 17px; }
.profile { margin: -4px 0 0 20px; }
.dots { margin: -2px 0 0 auto; }

.bookmarks { height: 47px; flex: none; background: #3c3c3c; border-bottom: 1px solid #4a4a4a; display: flex; align-items: center; padding: 0 18px 4px 23px; font-size: 14.25px; color: #c7c7c7; white-space: nowrap; }
.bookmarks span span, .all-bm { padding-bottom: 2px; }
.sep { width: 2px; height: 20px; background: #5c5c5c; border-radius: 1px; margin-left: 19px; }
.bm-list { display: flex; margin-left: 18px; flex: 1; }
.bm { display: flex; align-items: center; gap: 7.5px; flex: none; }
.bm-169 { width: 169px; }
.bm-95 { width: 95px; }
.bm-105 { width: 104.5px; }
.bm-132 { width: 132px; }
.bm-192 { width: 192.3px; }
.tight { letter-spacing: -.2px; }
.tight2 { letter-spacing: -.1px; }
.loose { letter-spacing: .07px; }
.bookmarks .more + .sep { margin-left: 21px; }
.folder { margin: 0 9px 0 20px; }

/* Page */
.viewport { position: relative; height: 869px; flex: none; display: flex; overflow: hidden; }
.page { width: 1901px; height: 1027px; flex: none; display: flex; flex-direction: column; background: linear-gradient(135deg, #3a8098 0%, #4a74c0 50%, #1e3a70 100%); }
.navbar { height: 70px; flex: none; position: relative; z-index: 2; display: flex; align-items: center; padding: 0 35px; background: linear-gradient(135deg, #3a8098 0%, #4a74c0 50%, #1e3a70 100%); box-shadow: 0 2px 6px rgba(0, 0, 0, .1); }
.burger { width: 62px; height: 50px; border: 1px solid #fff; border-radius: 7px; display: flex; flex-direction: column; align-items: center; justify-content: center; gap: 7px; padding-top: 4px; }
.burger i { width: 21px; height: 2px; background: rgba(255, 255, 255, .85); border-radius: 1px; }
.user { margin: 0 10px 0 20px; }
.username { font-size: 23.75px; letter-spacing: -.26px; color: #fff; flex: 1; line-height: 30px; padding-top: 2px; }
.logout { width: 95px; height: 47px; border: 1px solid #fff; border-radius: 7.5px; background: none; color: #fff; font-size: 19px; letter-spacing: .08px; padding: 2px 0 0; }

.body { flex: 1; display: flex; }
.sidebar { width: 313px; height: 799px; flex: none; padding: 20px 15px 0 25px; border-right: 1px solid rgba(255, 255, 255, .15); background: linear-gradient(135deg, #3a8098 0%, #4a74c0 50%, #1e3a70 100%); box-shadow: 3px 0 14px rgba(0, 0, 0, .2); }
.item { height: 50px; display: flex; align-items: center; gap: 10px; padding-left: 15px; border-radius: 7.5px; font: 500 19px/30px "Noto Sans", sans-serif; letter-spacing: -.03px; color: #212529; }
.item span { padding-top: 2px; }
.item svg { fill: currentColor; }
.item.active { padding-left: 20px; color: #fff; font-weight: 600; letter-spacing: -.12px; background: linear-gradient(135deg, #1f3b73, #2a5298); }

.main { flex: 1; padding: 51px 35px 0; }
.heading { margin-left: -2px; font: 500 33.25px/42px "Noto Sans", sans-serif; letter-spacing: -.04px; }
.grid { display: grid; grid-template-columns: repeat(3, 486px); gap: 30px; margin-top: 29px; }
.card { background: #fff; border: 1px solid #0d6efd; border-radius: 7.5px; padding: 20px; display: flex; flex-direction: column; box-shadow: 0 2px 5px rgba(0, 0, 0, .1); }
.card-head { display: flex; justify-content: space-between; height: 32px; }
.title { margin-top: 2px; font: 500 23.75px/30px "Noto Sans", sans-serif; letter-spacing: -.14px; white-space: nowrap; }
.title.wide { letter-spacing: .26px; }
.badge { height: 32px; padding: 0 12.5px; border-radius: 16px; font: 700 17.81px/31px "Open Sans", sans-serif; letter-spacing: .37px; color: #fff; }
.badge.info { background: #0dcaf0; }
.badge.success { background: #198754; }
.badge.secondary { background: #6c757d; }
.sub { margin-top: 6px; font: 500 16.63px/21px "Noto Sans", sans-serif; letter-spacing: -.09px; color: #595c5f; }
.desc { margin-top: 19px; font-size: 17.1px; line-height: 27px; letter-spacing: -.03px; white-space: nowrap; }
.desc strong { letter-spacing: -.1px; }
.desc .loose { letter-spacing: .06px; }
.form { margin-top: auto; padding-top: 21px; }
.label { display: block; font-size: 19px; line-height: 30px; letter-spacing: -.27px; }
.select { margin-top: 9px; height: 47px; border: 1px solid #dee2e6; border-radius: 7.5px; display: flex; align-items: center; justify-content: space-between; padding: 0 15px 0 14.5px; font-size: 19px; letter-spacing: 0; }
.select svg { width: 16px; height: 16px; margin-right: 2px; }
.update { display: block; margin-top: 20px; width: 155px; height: 47px; border: 0; border-radius: 7.5px; background: #62a0fe; color: #fff; font-size: 19px; letter-spacing: -.15px; padding: 0; }

.scrollbar { width: 19px; background: #2c2c2c; display: flex; flex-direction: column; align-items: center; padding: 6px 0 5px; }
.thumb { width: 11px; height: 702px; margin: 6px 0 auto; border-radius: 6px; background: #9f9f9f; }
.status-bubble { position: absolute; z-index: 3; left: 0; bottom: 0; width: 273px; height: 27px; padding-left: 5.5px; background: #1f2120; border-radius: 0 5px 0 0; border-top: 1px solid #34373a; border-right: 1px solid #34373a; font-size: 14.25px; line-height: 25px; color: #c7c7c7; white-space: nowrap; }

/* Taskbar */
.taskbar { height: 60px; flex: none; display: flex; align-items: center; border-top: 1px solid #45474a; color: #fff; background: linear-gradient(90deg, #271f23 0%, #221f26 22%, #1a272e 42%, #1d2329 60%, #1f222a 78%, #271f25 92%); }
.weather { width: 530px; padding: 0 0 2px 25px; display: flex; }
.cloud { position: relative; width: 32px; padding-top: 11px; }
.count { position: absolute; left: 14px; top: -2px; width: 20px; height: 20px; border-radius: 50%; background: #ff99a4; color: #111; font-size: 13px; line-height: 20px; text-align: center; }
.lines { display: flex; flex-direction: column; margin-left: 7px; font-size: 14.25px; line-height: 20px; letter-spacing: .2px; color: #c9c6c8; }
.temp { color: #fff; letter-spacing: -.1px; }
.dock { display: flex; align-items: center; flex: 1; height: 59px; }
.search { width: 275px; height: 40px; margin: 0 2px 0 17px; border-radius: 20px; border: 1px solid #56575c; background: #3d3f44; display: flex; align-items: center; padding: 0 5px 0 14px; font-size: 16.63px; letter-spacing: -.14px; color: #cfcfd1; }
.search span { margin-left: 12px; flex: 1; }
.app { position: relative; width: 55px; height: 50px; display: flex; align-items: center; justify-content: center; flex: none; }
.app.run::after { content: ""; position: absolute; bottom: 0; left: 23px; width: 8px; height: 4px; border-radius: 2px; background: #9b9da0; }
.app.current::before { content: ""; position: absolute; left: 2px; top: -1px; width: 44px; height: 51px; border-radius: 6px; background: #30353c; border: 1px solid #3b4047; box-shadow: 5px 0 0 -1px #2a2f35; }
.app.current::after { content: ""; position: absolute; bottom: 0; left: 17px; width: 20px; height: 4px; border-radius: 2px; background: #2ff3ff; }
.app.current svg { position: relative; }
.app.current .mini { position: absolute; left: 28px; top: 3px; }
.app svg, .zoom { margin: 0 1px 1px 0; }
.app.current .mini { margin: 0; }
.zoom { width: 30px; height: 30px; border-radius: 10px; background: #0b5cff; color: #fff; font-weight: 600; font-size: 9.5px; line-height: 28px; text-align: center; }
.tray { width: 320px; display: flex; align-items: center; font-size: 14.25px; line-height: 20px; letter-spacing: .14px; padding-bottom: 1px; }
.t-mic { margin-left: 20px; }
.lang { display: flex; flex-direction: column; align-items: center; width: 34px; margin-left: 17px; padding-bottom: 1px; }
.t-wifi { margin-left: 20px; }
.t-vol { margin-left: 10px; }
.t-bat { margin-left: 10px; }
.clock { display: flex; flex-direction: column; align-items: flex-end; margin-left: auto; padding: 0 25px 1px 0; }
```
